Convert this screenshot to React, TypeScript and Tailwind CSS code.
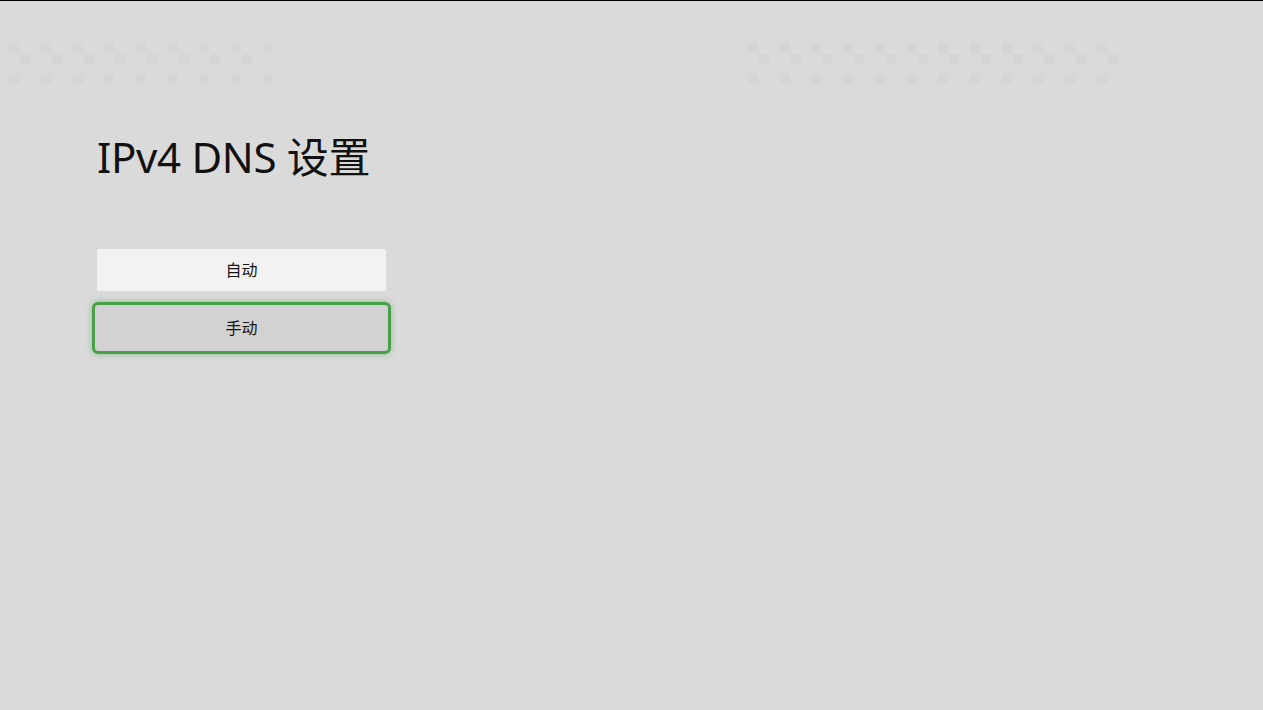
import React from "react";

function Checker({ count, offset }: { count: number; offset: number }) {
  const rows = [
    { n: count, shift: 0, mt: 0 },
    { n: count - (offset ? 0 : 1), shift: 11, mt: 0.7 },
    { n: count, shift: 0, mt: 10.3 },
  ];
  return (
    <div className="flex flex-col">
      {rows.map((r, i) => (
        <div
          key={i}
          className="flex gap-[21.7px]"
          style={{ paddingLeft: r.shift, marginTop: r.mt }}
        >
          {Array.from({ length: r.n }).map((_, j) => (
            <div key={j} className="w-[10px] h-[10px] bg-[#d5d5d5]" />
          ))}
        </div>
      ))}
    </div>
  );
}

export default function App() {
  return (
    <div
      className="w-[1263px] h-[710px] bg-[#dadada] border-t border-black overflow-hidden"
      style={{ fontFamily: '"Noto Sans", "Noto Sans CJK SC", sans-serif' }}
    >
      <div className="flex pt-[42.3px] pl-[9.3px]">
        <Checker count={9} offset={0} />
        <div className="ml-[475.3px]">
          <Checker count={12} offset={1} />
        </div>
      </div>
      <div className="pl-[97px] mt-[48px]">
        <h1 className="text-[42px] leading-[50px] font-normal text-[#111] tracking-[-0.3px]">
          IPv4 DNS 设置
        </h1>
      </div>
      <div className="flex flex-col items-start pl-[92px] mt-[67px]">
        <div className="ml-[5px] w-[289px] h-[42px] bg-[#f2f2f2] rounded-[2px] flex items-center justify-center text-[16px] text-[#151515]">
          自动
        </div>
        <div className="mt-[11px] w-[299px] h-[52px] rounded-[6px] border-[3px] border-[#47a047] bg-[#d2d2d2] shadow-[0_0_6px_rgba(67,160,67,0.5)] flex items-center justify-center text-[16px] text-[#151515]">
          手动
        </div>
      </div>
    </div>
  );
}
